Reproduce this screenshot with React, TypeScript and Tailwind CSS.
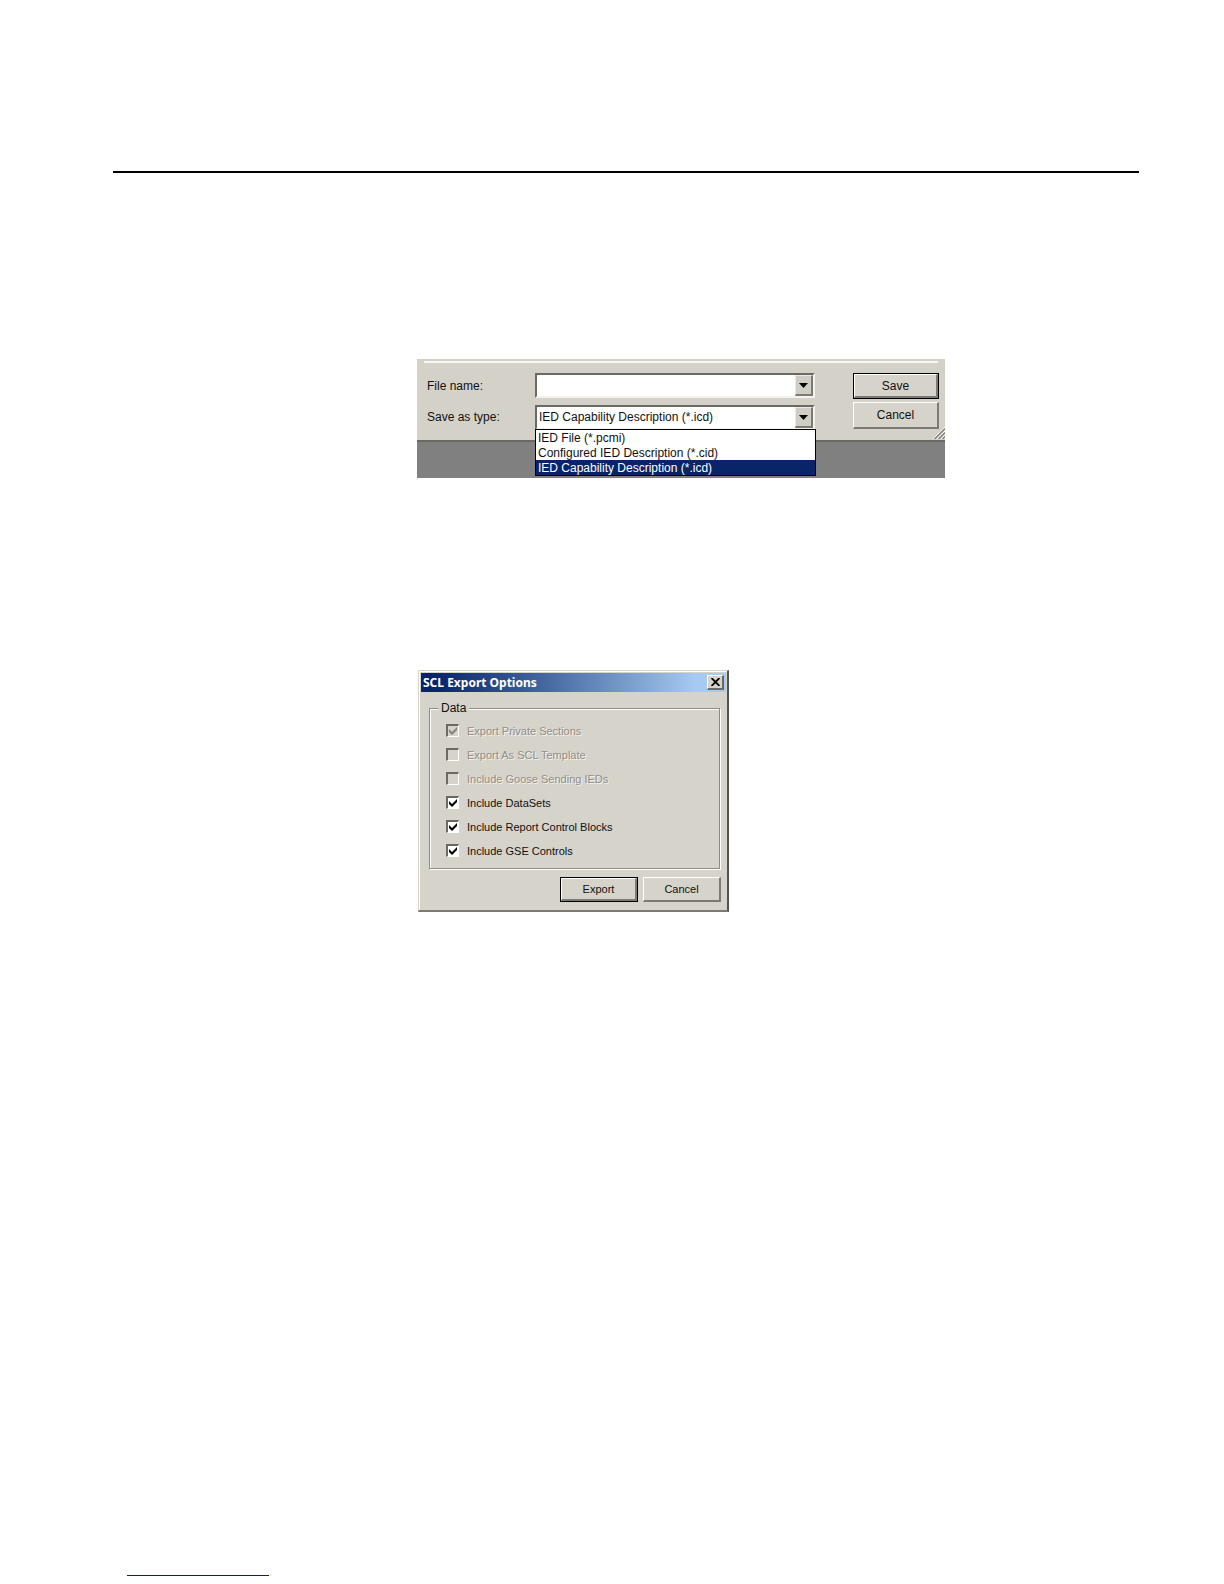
import { useState, type ReactNode } from "react";

const FILE_TYPES = [
  "IED File (*.pcmi)",
  "Configured IED Description (*.cid)",
  "IED Capability Description (*.icd)",
];

const EXPORT_OPTIONS = [
  { id: "private", label: "Export Private Sections", checked: true, disabled: true },
  { id: "template", label: "Export As SCL Template", checked: false, disabled: true },
  { id: "goose", label: "Include Goose Sending IEDs", checked: false, disabled: true },
  { id: "datasets", label: "Include DataSets", checked: true, disabled: false },
  { id: "reports", label: "Include Report Control Blocks", checked: true, disabled: false },
  { id: "gse", label: "Include GSE Controls", checked: true, disabled: false },
];

const SUNKEN =
  "border-2 border-t-[#6b6963] border-l-[#6b6963] border-r-[#f4f2ee] border-b-[#f4f2ee]";

function PushButton({ children, isDefault = false }: { children: ReactNode; isDefault?: boolean }) {
  return (
    <button
      type="button"
      className={
        isDefault
          ? "flex h-full w-full border border-black bg-[#d6d3cb] outline-none"
          : "flex h-full w-full bg-[#d6d3cb] outline-none"
      }
    >
      <span className="flex h-full w-full items-center justify-center border-t border-r-2 border-b-2 border-l border-t-white border-r-[#7d7a74] border-b-[#7d7a74] border-l-white leading-none">
        {children}
      </span>
    </button>
  );
}

function ArrowFace() {
  return (
    <span className="flex h-full w-full items-center justify-center border-t border-r-2 border-b-2 border-l border-t-[#ece9e3] border-r-[#7d7a74] border-b-[#7d7a74] border-l-[#ece9e3] bg-[#d0cdc5]">
      <svg width="9" height="5" viewBox="0 0 9 5" aria-hidden="true">
        <path d="M0 0H9L4.5 5Z" fill="#000" />
      </svg>
    </span>
  );
}

function SaveDialog() {
  const [type, setType] = useState(FILE_TYPES[2]);
  return (
    <section aria-label="Save as" className="w-full max-w-[528px] bg-[#808080] pb-[36px]">
      <div className="relative border-b-2 border-[#6b6963] bg-[#d4d1c9] pt-[2px]">
        <div className="mr-[7px] ml-[7px] h-[2px] bg-[#f8f7f4]" />
        <div className="flex justify-between pt-[10px] pr-[6px] pb-[10px] pl-[10px]">
          <div className="grid flex-1 grid-cols-[108px_minmax(0,280px)] gap-y-[7px]">
            <label htmlFor="file-name" className="self-center">
              File name:
            </label>
            <div className={`flex h-[25px] bg-white ${SUNKEN}`}>
              <input id="file-name" type="text" className="min-w-0 flex-1 px-[2px] outline-none" />
              <button type="button" aria-label="Show recent names" className="h-full w-[18px]">
                <ArrowFace />
              </button>
            </div>
            <label htmlFor="file-type" className="self-center pb-[2px]">
              Save as type:
            </label>
            <div className="relative">
              <div className={`relative flex h-[25px] bg-white ${SUNKEN}`}>
                <select
                  id="file-type"
                  value={type}
                  onChange={(e) => setType(e.target.value)}
                  className="min-w-0 flex-1 appearance-none pb-[2px] pl-[2px] outline-none"
                >
                  {FILE_TYPES.map((t) => (
                    <option key={t}>{t}</option>
                  ))}
                </select>
                <div className="pointer-events-none w-[18px]">
                  <ArrowFace />
                </div>
              </div>
              <ul
                role="listbox"
                aria-label="File types"
                className="absolute top-[24px] left-0 z-10 w-[281px] border border-black bg-white"
              >
                {FILE_TYPES.map((t) => (
                  <li
                    key={t}
                    role="option"
                    aria-selected={t === type}
                    onClick={() => setType(t)}
                    className={
                      t === type
                        ? "h-[15px] bg-[#0a246a] pl-[2px] leading-[17px] text-white"
                        : "h-[15px] pl-[2px] leading-[17px]"
                    }
                  >
                    {t}
                  </li>
                ))}
              </ul>
            </div>
          </div>
          <div className="flex w-[86px] flex-col gap-[3px]">
            <div className="h-[26px]">
              <PushButton isDefault>Save</PushButton>
            </div>
            <div className="h-[27px]">
              <PushButton>Cancel</PushButton>
            </div>
          </div>
        </div>
        <svg
          className="absolute right-0 bottom-[1px]"
          width="12"
          height="12"
          viewBox="0 0 12 12"
          aria-hidden="true"
        >
          <path d="M0 12L12 0M4 12L12 4M8 12L12 8" stroke="#fff" strokeWidth="1" />
          <path d="M1.5 12L12 1.5M5.5 12L12 5.5M9.5 12L12 9.5" stroke="#86837d" strokeWidth="1.5" />
        </svg>
      </div>
    </section>
  );
}

function OptionRow({ option }: { option: (typeof EXPORT_OPTIONS)[number] }) {
  const [checked, setChecked] = useState(option.checked);
  return (
    <div className="flex h-[24px] items-center gap-[8px]">
      <span className="relative flex h-[13px] w-[13px]">
        <input
          id={option.id}
          type="checkbox"
          checked={checked}
          disabled={option.disabled}
          onChange={(e) => setChecked(e.target.checked)}
          className="h-[13px] w-[13px] appearance-none border-t-2 border-r border-b border-l-2 border-t-[#6b6963] border-r-white border-b-white border-l-[#6b6963] bg-white disabled:bg-[#d6d3cb]"
        />
        {checked && (
          <svg
            className="pointer-events-none absolute top-[3px] left-[3px]"
            width="8"
            height="8"
            viewBox="0 0 8 8"
            aria-hidden="true"
          >
            <path d="M0 2L3 5L8 0V3L3 8L0 5Z" fill={option.disabled ? "#86837d" : "#000"} />
          </svg>
        )}
      </span>
      <label
        htmlFor={option.id}
        className={
          option.disabled
            ? "pt-[3px] text-[#918e88] [text-shadow:1px_1px_0_#f4f2ee]"
            : "pt-[3px]"
        }
      >
        {option.label}
      </label>
    </div>
  );
}

function ExportDialog() {
  return (
    <section
      aria-labelledby="export-title"
      className="w-full max-w-[311px] border-t border-r-2 border-b-2 border-l border-t-[#d6d3cb] border-r-[#55534f] border-b-[#7d7a74] border-l-[#d6d3cb] bg-[#d6d3cb] text-[11px]"
    >
      <div className="border-t border-l border-white px-[1px] pt-[1px]">
        <header className="flex h-[19px] items-center justify-between bg-linear-to-r from-[#0a246a] from-5% to-[#a6caf0] to-90% pr-[2px] pl-[2px]">
          <h2
            id="export-title"
            className="font-['Noto_Sans',sans-serif] text-[12px] leading-[19px] font-bold text-white"
          >
            SCL Export Options
          </h2>
          <button
            type="button"
            aria-label="Close"
            className="flex h-[15px] w-[17px] items-center justify-center border-t border-r-2 border-b-2 border-l border-t-white border-r-[#6b6963] border-b-[#6b6963] border-l-white bg-[#d6d3cb]"
          >
            <svg width="9" height="8" viewBox="0 0 9 8" aria-hidden="true">
              <path d="M0.5 0L8.5 8M8.5 0L0.5 8" stroke="#000" strokeWidth="1.8" />
            </svg>
          </button>
        </header>
        <div className="pt-[8px] pr-[5px] pb-[8px] pl-[8px]">
          <fieldset className="mr-px border border-[#8e8b85] px-[16px] pt-[2px] pb-[6px] shadow-[1px_1px_0_#fff,inset_1px_1px_0_#fff]">
            <legend className="-ml-[8px] bg-[#d6d3cb] px-[3px] text-[12px] leading-[16px]">Data</legend>
            {EXPORT_OPTIONS.map((o) => (
              <OptionRow key={o.id} option={o} />
            ))}
          </fieldset>
          <div className="flex justify-end gap-[5px] pt-[8px]">
            <div className="h-[25px] w-[78px]">
              <PushButton isDefault>Export</PushButton>
            </div>
            <div className="h-[25px] w-[78px]">
              <PushButton>Cancel</PushButton>
            </div>
          </div>
        </div>
      </div>
    </section>
  );
}

export default function App() {
  return (
    <main className="flex min-h-screen flex-col bg-white pt-[171px] pr-[85px] pb-[8px] pl-[113px] font-['Liberation_Sans',Arial,sans-serif] text-[12px] text-[#111]">
      <hr className="w-full border-0 border-t-2 border-black" />
      <div className="flex flex-col gap-[192px] pt-[186px] pl-[304px]">
        <SaveDialog />
        <div className="pl-[1px]">
          <ExportDialog />
        </div>
      </div>
      <div role="separator" className="mt-auto ml-[14px] h-px w-[142px] bg-[#14148c]" />
    </main>
  );
}
